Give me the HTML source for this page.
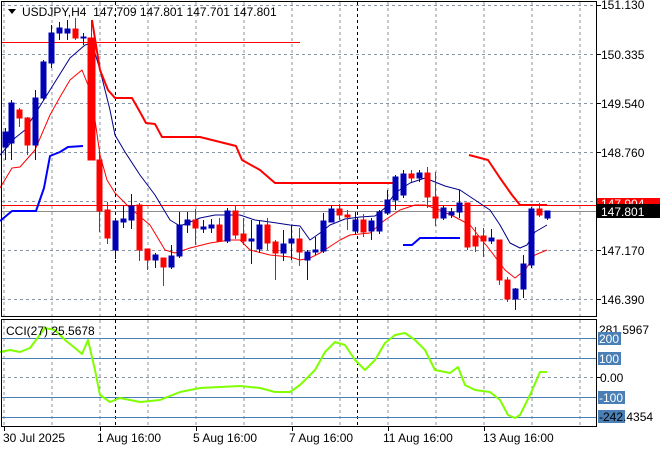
<!DOCTYPE html><html><head><style>body{margin:0;background:#fff}svg{display:block}text{font-family:"Liberation Sans",sans-serif;font-size:12px;fill:#000}</style></head><body>
<svg width="660" height="450" viewBox="0 0 660 450" xmlns="http://www.w3.org/2000/svg">
<rect width="660" height="450" fill="#fff"/>
<g stroke="#8a96a6" stroke-dasharray="3,3" stroke-width="1">
<path d="M4 2V316M52 2V316M100 2V316M148 2V316M196 2V316M244 2V316M292 2V316M340 2V316M388 2V316M436 2V316M484 2V316M532 2V316M580 2V316M4 320V426M52 320V426M100 320V426M148 320V426M196 320V426M244 320V426M292 320V426M340 320V426M388 320V426M436 320V426M484 320V426M532 320V426M580 320V426"/>
<path d="M2 5.5H596M2 54.5H596M2 103.5H596M2 152.5H596M2 201.5H596M2 250.5H596M2 299.5H596M2 377.5H596"/>
</g>
<g stroke="#000" stroke-dasharray="3,3"><path d="M115.5 2V316M357.5 2V316M115.5 320V426M357.5 320V426"/></g>
<g stroke="#4a7fb5"><path d="M2 338.5H596M2 358.5H596M2 397.5H596M2 417.5H596"/></g>
<path d="M2 42.5H300" stroke="#f00"/>
<path d="M2 205.5H596" stroke="#f00"/>
<path d="M2 211.5H596" stroke="#8c8c8c"/>
<g fill="none" stroke-linejoin="round">
<polyline stroke="#00008b" points="0,155 15,138 25,130 50,90 70,58 85,45 92,43 100,70 110,110 115,135 125,152 140,175 155,195 170,220 180,226 200,218 215,215 240,215 255,220 270,222 290,225 300,226 310,240 320,233 330,225 345,219 360,217 375,216 385,208 395,193 410,183 425,178 430,180 445,186 460,190 475,200 490,210 500,225 510,243 520,248 527,245 535,232 547,225"/>
<polyline stroke="#f00" points="0,188 12,168 20,167 35,150 50,115 60,97 70,80 82,70 88,85 95,120 100,155 107,180 115,193 130,208 150,225 165,250 175,253 190,248 210,243 230,240 240,240 250,250 270,255 290,257 300,260 310,258 320,253 340,240 350,235 370,233 385,220 400,210 415,205 425,205 440,210 455,217 470,225 490,250 505,270 515,278 525,270 535,255 547,250"/>
<polyline stroke="#f00" stroke-width="2" points="92,20 100,70 108,90 115,98 132,98 140,112 146,123 155,124 162,137 200,137 212,140 236,146 242,160 260,170 275,183 395,183"/>
<polyline stroke="#f00" stroke-width="2" points="469,155 488,160 500,178 512,195 520,205 547,205"/>
<polyline stroke="#00f" stroke-width="2" points="0,221 12,211 36,211 44,188 50,156 60,152 68,147 83,146"/>
<polyline stroke="#00f" stroke-width="2" points="403,245 412,245 420,238 460,238"/>
<polyline stroke="#7fff00" stroke-width="2" points="0,352 10,350 20,352 30,348 45,328 55,330 65,340 75,348 82,354 88,340 95,370 100,395 110,402 120,398 130,400 140,402 160,400 180,392 200,388 240,386 260,388 275,392 290,392 300,385 315,370 325,352 335,342 345,345 355,360 365,370 375,360 385,343 395,335 405,333 415,340 425,350 435,370 450,373 458,367 465,385 475,390 490,392 500,400 508,415 515,418 520,415 530,395 540,372 547,372"/>
</g>
<g stroke-width="1">
<g stroke="#0000b4" fill="#0000b4">
<path d="M5.5 128V160M11.5 100V160M35.5 90V160M43.5 60V100M51.5 25V68M59.5 22V40M67.5 20V40M83.5 33V45M115.5 220V259M123.5 205V228M131.5 194V229M155.5 253V268M171.5 245V269M179.5 212V258M187.5 212V233M203.5 220V233M211.5 219V233M227.5 208V243M251.5 220V264M259.5 220V253M283.5 230V261M291.5 225V260M307.5 250V280M315.5 237V255M323.5 213V253M331.5 205V222M355.5 212V234M371.5 218V240M379.5 210V234M387.5 190V215M395.5 175V210M403.5 170V198M419.5 170V182M443.5 205V220M451.5 208V218M459.5 190V218M491.5 229V244M515.5 288V310M523.5 255V298M531.5 207V268M547.5 211V220"/>
<rect x="3" y="132" width="5" height="15"/><rect x="9" y="103" width="5" height="40"/><rect x="33" y="98" width="5" height="47"/><rect x="41" y="62" width="5" height="36"/><rect x="49" y="33" width="5" height="30"/><rect x="57" y="28" width="5" height="5"/><rect x="65" y="29" width="5" height="4"/><rect x="81" y="37" width="5" height="1"/>
<rect x="113" y="221" width="5" height="29"/><rect x="121" y="219" width="5" height="3"/><rect x="129" y="206" width="5" height="14"/><rect x="153" y="255" width="5" height="5"/><rect x="169" y="256" width="5" height="11"/><rect x="177" y="225" width="5" height="31"/><rect x="185" y="220" width="5" height="5"/><rect x="201" y="227" width="5" height="2"/><rect x="209" y="225" width="5" height="3"/><rect x="225" y="211" width="5" height="30"/><rect x="249" y="239" width="5" height="2"/><rect x="257" y="225" width="5" height="24"/><rect x="281" y="244" width="5" height="9"/><rect x="289" y="239" width="5" height="4"/><rect x="305" y="252" width="5" height="8"/><rect x="313" y="250" width="5" height="2"/><rect x="321" y="221" width="5" height="30"/><rect x="329" y="209" width="5" height="13"/><rect x="353" y="220" width="5" height="11"/><rect x="369" y="221" width="5" height="10"/><rect x="377" y="212" width="5" height="19"/><rect x="385" y="200" width="5" height="13"/><rect x="393" y="177" width="5" height="23"/><rect x="401" y="174" width="5" height="21"/><rect x="417" y="173" width="5" height="5"/><rect x="441" y="208" width="5" height="10"/><rect x="449" y="212" width="5" height="3"/><rect x="457" y="203" width="5" height="9"/><rect x="489" y="238" width="5" height="3"/><rect x="513" y="289" width="5" height="10"/><rect x="521" y="264" width="5" height="25"/><rect x="529" y="209" width="5" height="56"/><rect x="545" y="211" width="5" height="7"/>
</g>
<g stroke="#f00" fill="#f00">
<path d="M19.5 108V127M27.5 117V155M75.5 18V40M91.5 20V160M99.5 150V232M107.5 202V244M139.5 203V261M147.5 250V270M163.5 258V286M195.5 209V245M219.5 218V241M235.5 206V239M243.5 218V245M267.5 218V250M275.5 240V280M299.5 228V266M339.5 204V220M347.5 210V230M363.5 214V237M411.5 170V182M427.5 167V208M435.5 172V226M467.5 203V250M475.5 227V252M483.5 228V257M499.5 240V285M507.5 277V302M539.5 203V217"/>
<rect x="17" y="110" width="5" height="8"/><rect x="25" y="118" width="5" height="27"/><rect x="73" y="29" width="5" height="9"/><rect x="88" y="38" width="7" height="122"/><rect x="97" y="160" width="5" height="51"/><rect x="105" y="210" width="5" height="28"/><rect x="137" y="205" width="5" height="45"/><rect x="145" y="249" width="5" height="11"/><rect x="161" y="258" width="5" height="9"/><rect x="193" y="220" width="5" height="8"/><rect x="217" y="225" width="5" height="16"/><rect x="233" y="211" width="5" height="24"/><rect x="241" y="234" width="5" height="7"/><rect x="265" y="225" width="5" height="18"/><rect x="273" y="242" width="5" height="11"/><rect x="297" y="239" width="5" height="13"/><rect x="337" y="209" width="5" height="6"/><rect x="345" y="215" width="5" height="2"/><rect x="361" y="220" width="5" height="12"/><rect x="409" y="174" width="5" height="4"/><rect x="425" y="173" width="5" height="24"/><rect x="433" y="197" width="5" height="21"/><rect x="465" y="203" width="5" height="44"/><rect x="473" y="236" width="5" height="10"/><rect x="481" y="236" width="5" height="5"/><rect x="497" y="240" width="5" height="40"/><rect x="505" y="280" width="5" height="19"/><rect x="537" y="209" width="5" height="6"/>
</g>
</g>
<g fill="none" stroke="#000"><rect x="1.5" y="1.5" width="595" height="315"/><rect x="1.5" y="319.5" width="595" height="107"/></g>
<path d="M8 9l8 0l-4 5z" fill="#000"/>
<text x="22" y="16" style="white-space:pre">USDJPY,H4  147.709 147.801 147.701 147.801</text>
<text x="6" y="335">CCI(27) 25.5678</text>
<g stroke="#000"><path d="M597 5.5h4M597 54.5h4M597 103.5h4M597 152.5h4M597 250.5h4M597 299.5h4M597 377.5h4"/></g>
<text x="601" y="9">151.130</text><text x="601" y="59">150.335</text><text x="601" y="108">149.540</text><text x="601" y="157">148.760</text><text x="601" y="255">147.170</text><text x="601" y="304">146.390</text>
<rect x="597" y="198" width="63" height="11" fill="#f00"/><text x="601" y="208" style="fill:#fff">147.904</text>
<rect x="597" y="204" width="63" height="14" fill="#000"/><text x="601" y="216" style="fill:#fff">147.801</text>
<text x="599" y="334">281.5967</text>
<rect x="598" y="332" width="23" height="13" fill="#4a7fb5"/><text x="599" y="343" style="fill:#fff">200</text>
<rect x="598" y="352" width="23" height="13" fill="#4a7fb5"/><text x="599" y="363" style="fill:#fff">100</text>
<text x="600" y="382">0.00</text>
<rect x="598" y="391" width="27" height="13" fill="#4a7fb5"/><text x="599" y="402" style="fill:#fff">-100</text>
<rect x="598" y="410" width="27" height="13" fill="#4a7fb5"/><text x="599" y="421">-242.4354</text>
<g stroke="#000"><path d="M4.5 427v4M100.5 427v4M196.5 427v4M292.5 427v4M388.5 427v4M484.5 427v4"/></g>
<text x="3" y="442">30 Jul 2025</text><text x="97" y="442">1 Aug 16:00</text><text x="193" y="442">5 Aug 16:00</text><text x="289" y="442">7 Aug 16:00</text><text x="383" y="442">11 Aug 16:00</text><text x="483" y="442">13 Aug 16:00</text>
</svg></body></html>
